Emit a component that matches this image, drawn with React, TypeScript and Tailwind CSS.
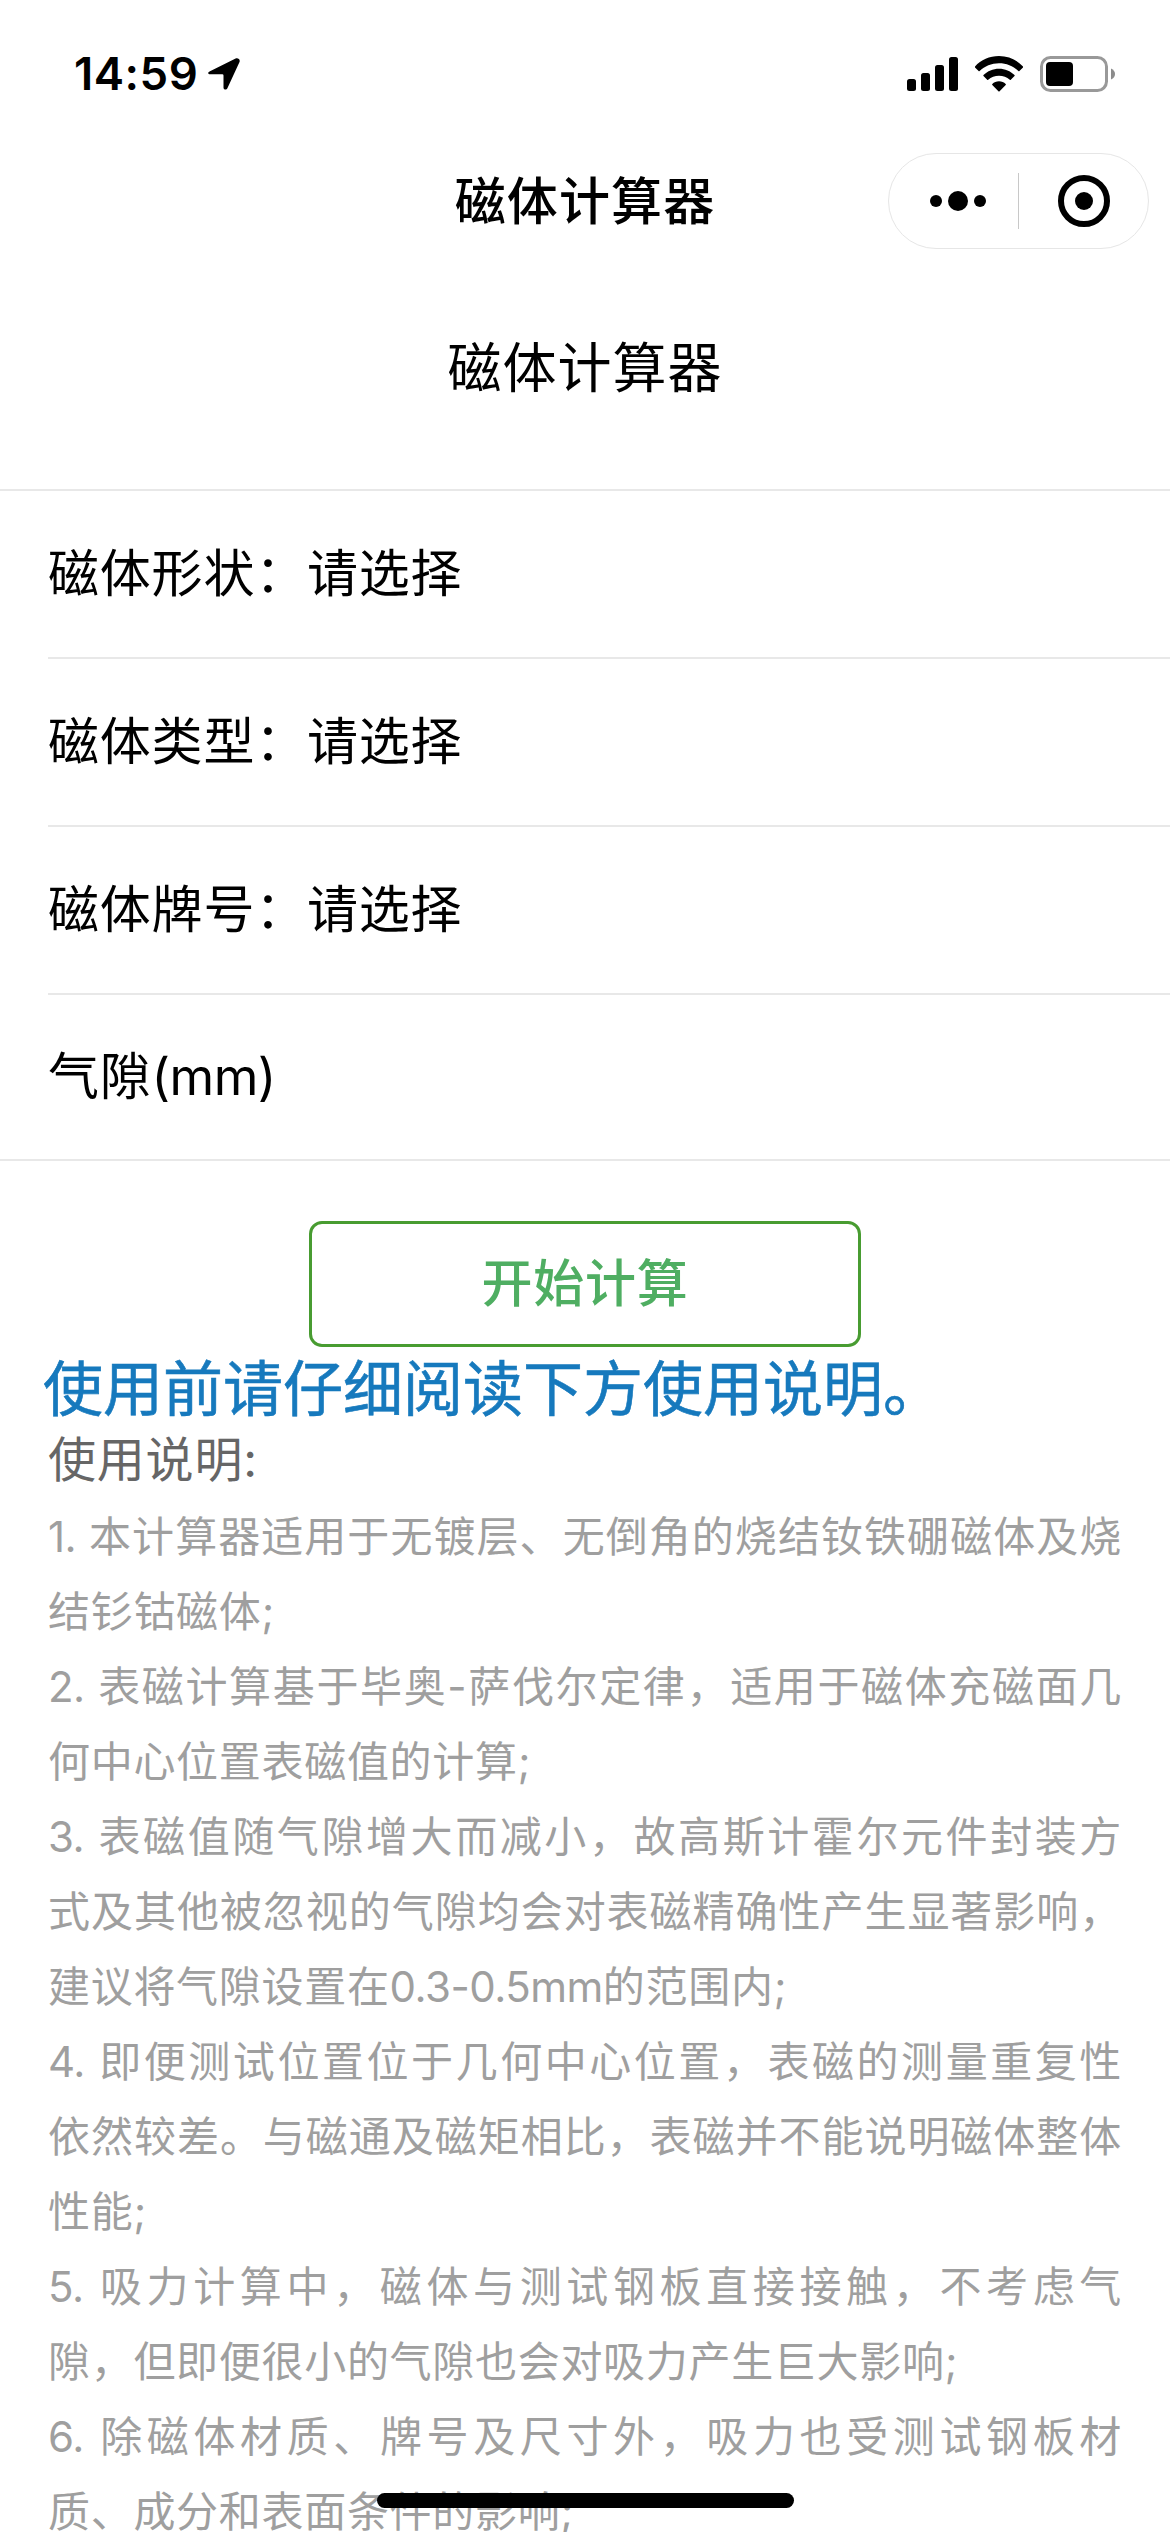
import clsx from "clsx";

interface Field {
  label: string;
  unit?: string;
  value?: string;
}

const fields: Field[] = [
  { label: "磁体形状：", value: "请选择" },
  { label: "磁体类型：", value: "请选择" },
  { label: "磁体牌号：", value: "请选择" },
  { label: "气隙", unit: "(mm)" },
];

// every note is split in the lines in which it is set
const notes: string[][] = [
  ["1. 本计算器适用于无镀层、无倒角的烧结钕铁硼磁体及烧", "结钐钴磁体;"],
  ["2. 表磁计算基于毕奥-萨伐尔定律，适用于磁体充磁面几", "何中心位置表磁值的计算;"],
  [
    "3. 表磁值随气隙增大而减小，故高斯计霍尔元件封装方",
    "式及其他被忽视的气隙均会对表磁精确性产生显著影响，",
    "建议将气隙设置在0.3-0.5mm的范围内;",
  ],
  [
    "4. 即便测试位置位于几何中心位置，表磁的测量重复性",
    "依然较差。与磁通及磁矩相比，表磁并不能说明磁体整体",
    "性能;",
  ],
  ["5. 吸力计算中，磁体与测试钢板直接接触，不考虑气", "隙，但即便很小的气隙也会对吸力产生巨大影响;"],
  ["6. 除磁体材质、牌号及尺寸外，吸力也受测试钢板材", "质、成分和表面条件的影响;"],
];

export default function App() {
  return (
    <div
      lang="zh-CN"
      className="relative flex h-[2532px] w-[1170px] flex-col overflow-hidden bg-white font-['Inter','Noto_Sans_CJK_SC',sans-serif] text-black"
    >
      <StatusBar />
      <NavBar />

      <h1 className="flex h-[238px] shrink-0 items-center justify-center pb-[4px] text-[54px] tracking-[1px]">
        磁体计算器
      </h1>

      <FieldList />

      <div className="flex shrink-0 justify-center pt-[60px]">
        <button
          type="button"
          className="flex h-[126px] w-[552px] items-center justify-center rounded-[13px] border-[3px] border-[#489c31] text-[51px] font-medium tracking-[0.8px] text-[#4fae62]"
        >
          开始计算
        </button>
      </div>

      <p className="h-[84px] shrink-0 pl-[43px] text-[60px] leading-[84px] whitespace-nowrap text-[#1679bd] [-webkit-text-stroke:0.6px_#1679bd]">
        使用前请仔细阅读下方使用说明。
      </p>
      <section className="shrink-0 px-[48px]">
        <h2 className="h-[68px] text-[48px] leading-[57px] tracking-[0.8px] text-[#666666]">
          使用说明:
        </h2>
        <div className="text-[42px] leading-[75px] tracking-[0.7px] text-[#9f9f9f]">
          {notes.map((lines) => (
            <NoteItem key={lines[0]} lines={lines} />
          ))}
        </div>
      </section>

      <div className="absolute top-[2493px] left-[377px] h-[15px] w-[417px] rounded-full bg-black" />
    </div>
  );
}

function StatusBar() {
  return (
    <header className="flex h-[153px] shrink-0 justify-between pt-[50px] pr-[55px] pl-[73px]">
      <div className="flex h-[48px] items-center">
        <span className="w-[135px] pl-px text-[45.500px] leading-[48px] font-semibold tracking-[0.500px]">
          14:59
        </span>
        <svg width="32" height="32" viewBox="0 0 32 32">
          <path
            d="M2 13.2 27.6 .5C30 -.5 32.5 1.500 31.500 4L19.500 30C18.500 32.300 15.500 32 15.500 29.500V17.500Q15.500 16.300 14.300 16.300H2.500C-.4 16.300 -.6 14.300 2 13.200Z"
          />
        </svg>
      </div>

      <div className="flex h-[48px] items-center">
        <svg width="52" height="34" viewBox="0 0 52 34">
          <rect x="0" y="22" width="9" height="12" rx="2.500" />
          <rect x="14" y="16" width="9" height="18" rx="2.500" />
          <rect x="28" y="8" width="9" height="26" rx="2.500" />
          <rect x="42" y="0" width="9" height="34" rx="2.500" />
        </svg>
        <svg width="48" height="36" viewBox="0 0 48 36" className="ml-[16px]">
          <path d="M24 0C33.500 0 42 3.800 48 10.500Q48.400 11 48 11.500L44.400 15.100Q43.900 15.500 43.400 15C38.300 10 31.500 7.200 24 7.200S9.700 10 4.600 15Q4.100 15.500 3.600 15.100L0 11.500Q-.4 11 0 10.500C6 3.800 14.500 0 24 0Z" />
          <path d="M24 12.700C30 12.700 35.500 15 39.500 19Q40 19.500 39.500 20L35.800 23.800Q35.300 24.300 34.800 23.800C31.900 21.200 28.100 19.700 24 19.700S16.100 21.200 13.200 23.800Q12.700 24.300 12.200 23.800L8.500 20Q8 19.500 8.500 19C12.500 15 18 12.700 24 12.700Z" />
          <path d="M24 25.200C26.600 25.200 29 26.200 30.700 27.900Q31.200 28.400 30.700 28.900L24.600 35.300Q24 35.900 23.400 35.300L17.300 28.900Q16.800 28.400 17.300 27.900C19 26.200 21.400 25.200 24 25.200Z" />
        </svg>
        <svg width="75" height="36" viewBox="0 0 75 36" className="ml-[17px]">
          <rect x="1.500" y="1.500" width="65" height="33" rx="9" fill="none" stroke="#999999" strokeWidth="3" />
          <rect x="6" y="6" width="27" height="24" rx="4" />
          <path d="M71 12.500Q75 14.500 75 18T71 23.500Z" fill="#8c8c8c" />
        </svg>
      </div>
    </header>
  );
}

function NavBar() {
  return (
    <nav className="grid h-[98px] shrink-0 grid-cols-[1fr_262px_1fr] items-start pr-[21px] pl-[21px]">
      <span className="col-start-2 pt-px text-center text-[51px] leading-[96px] font-medium tracking-[1.100px] whitespace-nowrap">
        磁体计算器
      </span>
      <div className="flex h-[96px] w-[261px] items-center justify-self-end rounded-full border border-[#e6e6e6]">
        <div className="flex h-full w-[129px] items-center justify-center gap-[6px] pl-[8px]">
          <i className="size-[12px] rounded-full bg-black" />
          <i className="size-[20px] rounded-full bg-black" />
          <i className="size-[12px] rounded-full bg-black" />
        </div>
        <div className="h-[56px] w-px bg-[#c8c8c8]" />
        <div className="ml-[39px] flex size-[52px] items-center justify-center rounded-full border-[6px] border-black">
          <i className="size-[18px] rounded-full bg-black" />
        </div>
      </div>
    </nav>
  );
}

function FieldList() {
  return (
    <ul className="shrink-0 border-y-2 border-[#e8e8e8]">
      {fields.map(({ label, unit, value }, i) => (
        <li key={label} className="pl-[48px]">
          <div
            className={clsx(
              "flex items-center text-[51px] tracking-[0.8px]",
              i < fields.length - 1
                ? "h-[168px] border-b-2 border-[#e8e8e8]"
                : "h-[164px]"
            )}
          >
            <span>{label}</span>
            {unit && <span className="tracking-[-0.600px]">{unit}</span>}
            {value && <span>{value}</span>}
          </div>
        </li>
      ))}
    </ul>
  );
}

function NoteItem({ lines }: { lines: string[] }) {
  return (
    <div>
      {lines.map((line, i) => (
        <p
          key={line}
          className={clsx(
            "h-[75px] whitespace-nowrap",
            i < lines.length - 1 && "[text-align-last:justify]"
          )}
        >
          {/* digits and units are set tighter than the Chinese text */}
          {line.split(/([\da-z][\da-z.-]*)/).map((part, j) =>
            j % 2 ? (
              <span key={j} className="tracking-[-0.500px]">
                {part}
              </span>
            ) : (
              part
            )
          )}
        </p>
      ))}
    </div>
  );
}
